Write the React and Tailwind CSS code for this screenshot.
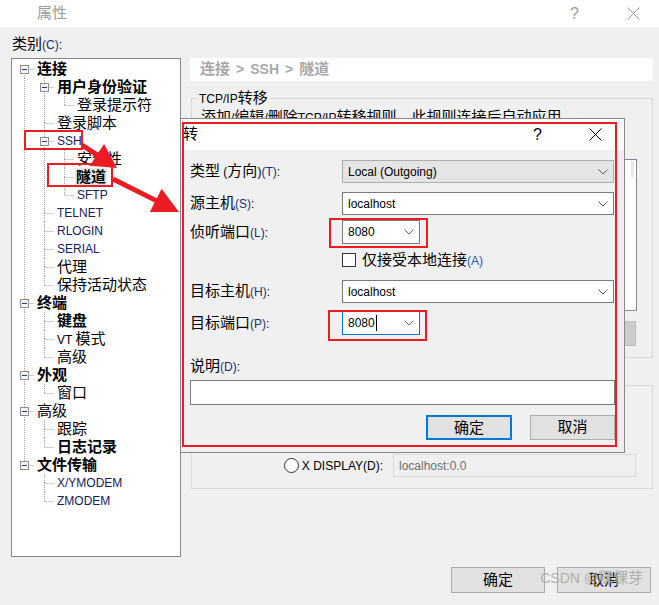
import React from 'react'

const CJK = /([\u2E80-\u9FFF\u3000-\u303F\uFF00-\uFFEF]+)/

function T({ s }) {
  return s.split(CJK).map((p, i) =>
    i % 2 ? <span key={i} className="text-[15px]">{p}</span> : p
  )
}

const nodes = [
  ['连接', 0, 1, 1], ['用户身份验证', 1, 1, 1], ['登录提示符', 2, 0, 0], ['登录脚本', 1, 0, 0],
  ['SSH', 1, 0, 1], ['安全性', 2, 0, 0], ['隧道', 2, 1, 0], ['SFTP', 2, 0, 0],
  ['TELNET', 1, 0, 0], ['RLOGIN', 1, 0, 0], ['SERIAL', 1, 0, 0], ['代理', 1, 0, 0],
  ['保持活动状态', 1, 0, 0], ['终端', 0, 1, 1], ['键盘', 1, 1, 0], ['VT 模式', 1, 0, 0],
  ['高级', 1, 0, 0], ['外观', 0, 1, 1], ['窗口', 1, 0, 0], ['高级', 0, 0, 1],
  ['跟踪', 1, 0, 0], ['日志记录', 1, 1, 0], ['文件传输', 0, 1, 1], ['X/YMODEM', 1, 0, 0],
  ['ZMODEM', 1, 0, 0],
]

function hasNext(i) {
  const lv = nodes[i][1]
  for (let j = i + 1; j < nodes.length; j++) {
    if (nodes[j][1] < lv) return false
    if (nodes[j][1] === lv) return true
  }
  return false
}

function guideOn(i, c) {
  for (let k = i - 1; k >= 0; k--) if (nodes[k][1] === c) return hasNext(k)
  return false
}

const dot = { stroke: '#a0a0a0', strokeDasharray: '1 1' }

function TreeRow({ i }) {
  const [label, lv, bold, kids] = nodes[i]
  const cols = []
  for (let c = 0; c < lv; c++) {
    cols.push(
      <svg key={c} width="20" height="18" className="shrink-0">
        {guideOn(i, c) && <line x1="10.5" y1="0" x2="10.5" y2="18" {...dot} />}
      </svg>
    )
  }
  const down = hasNext(i)
  const sel = label === '隧道'
  const latin = !CJK.test(label)
  return (
    <div className="flex h-[18px] items-center">
      {cols}
      <svg width="20" height="18" className="shrink-0">
        {i > 0 && <line x1="10.5" y1="0" x2="10.5" y2="9" {...dot} />}
        {down && <line x1="10.5" y1="9" x2="10.5" y2="18" {...dot} />}
        <line x1="10.5" y1="9.5" x2="20" y2="9.5" {...dot} />
        {kids ? (
          <g>
            <rect x="6.5" y="5.5" width="8" height="8" fill="#f3f3f3" stroke="#8f8f8f" />
            <line x1="8" y1="9.5" x2="13" y2="9.5" stroke="#2b3a86" />
          </g>
        ) : null}
      </svg>
      <span
        className={`whitespace-nowrap leading-[18px] ${bold ? 'font-bold' : ''} ${
          sel ? 'ml-[1px] bg-[#e6e6e6] px-[1px]' : 'ml-[3px]'
        } ${latin ? 'text-[#17205a]' : 'text-black'}`}
      >
        <T s={label} />
      </span>
    </div>
  )
}

const Chevron = () => (
  <svg width="10" height="6" className="shrink-0">
    <polyline points="0.5,0.5 5,5 9.5,0.5" fill="none" stroke="#606060" />
  </svg>
)

function Combo({ value, w = 'w-[272px]', grey, focus, caret }) {
  return (
    <div
      className={`${w} h-full flex items-center justify-between pl-[5px] pr-[5px] border ${
        grey ? 'bg-[#e5e5e5] border-[#adadad]' : 'bg-white border-[#7a7a7a]'
      } ${focus ? 'border-[#0078d7]' : ''}`}
    >
      <span className="flex items-center text-black">
        {value}
        {caret && <span className="inline-block w-px h-[16px] bg-black ml-[1px]" />}
      </span>
      <Chevron />
    </div>
  )
}

function Label({ cjk, k, tail = ':' }) {
  return (
    <span className="whitespace-nowrap">
      <T s={cjk} />
      <span className="text-[#1b2f74]">({k})</span>
      {tail}
    </span>
  )
}

function Row({ h, mt, children }) {
  return (
    <div className={`flex items-center ${h} ${mt}`}>
      {children}
    </div>
  )
}

function XIcon({ color }) {
  return (
    <svg width="13" height="13">
      <line x1="0.5" y1="0.5" x2="12.5" y2="12.5" stroke={color} />
      <line x1="12.5" y1="0.5" x2="0.5" y2="12.5" stroke={color} />
    </svg>
  )
}

function arrow(x1, y1, x2, y2, w = 3, hl = 24, hw = 12) {
  const dx = x2 - x1, dy = y2 - y1, len = Math.hypot(dx, dy)
  const ux = dx / len, uy = dy / len, nx = -uy, ny = ux
  const bx = x2 - ux * hl, by = y2 - uy * hl
  const p = [
    [x1 + nx * w, y1 + ny * w], [bx + nx * w, by + ny * w], [bx + nx * hw, by + ny * hw],
    [x2, y2], [bx - nx * hw, by - ny * hw], [bx - nx * w, by - ny * w], [x1 - nx * w, y1 - ny * w],
  ]
  return p.map((q) => q.join(',')).join(' ')
}

export default function App() {
  const red = '#ec1c24'
  return (
    <div className="relative w-[659px] h-[605px] overflow-hidden bg-[#f0f0f0] text-[12px] text-black font-['Liberation_Sans','Noto_Sans_CJK_SC',sans-serif]">
      {/* title bar */}
      <div className="h-[27px] bg-white flex items-center">
        <span className="ml-[37px] text-[#9a9a9a]"><T s="属性" /></span>
        <div className="flex-1" />
        <span className="text-[#9a9a9a] text-[16px] leading-none">?</span>
        <div className="ml-[48px] mr-[19px] flex">
          <XIcon color="#9a9a9a" />
        </div>
      </div>

      <div className="pl-[11px]">
        <div className="ml-[1px] mt-[8px] leading-[18px]">
          <Label cjk="类别" k="C" />
        </div>

        <div className="flex mt-[4px]">
          {/* tree */}
          <div className="w-[170px] h-[499px] shrink-0 border border-[#828790] bg-white pt-[1px] pl-[2px]">
            {nodes.map((_, i) => <TreeRow key={i} i={i} />)}
          </div>

          {/* right panel */}
          <div className="ml-[9px] w-[463px] flex flex-col">
            <div className="h-[23px] bg-white pl-[10px] flex items-center gap-[6px] font-bold text-[#a8a8a8] whitespace-nowrap text-[14px]">
              <span className="text-[15px]">连接</span>
              <span>&gt;</span>
              <span>SSH</span>
              <span>&gt;</span>
              <span className="text-[15px]">隧道</span>
            </div>

            <fieldset className="mt-[8px] ml-[1px] w-[462px] h-[269px] border border-[#d9d9d9] pl-[5px] pr-[15px] flex flex-col">
              <legend className="px-[2px] leading-[18px]"><T s="TCP/IP转移" /></legend>
              <div className="ml-[4px] h-[18px] leading-[18px] whitespace-nowrap">
                <T s="添加/编辑/删除TCP/IP转移规则。此规则连接后自动应用" />
              </div>
              <div className="ml-[4px] mt-[33px] h-[152px] border border-[#828790] bg-white flex justify-end">
                <div className="w-[3px] h-[16px] mr-[2px] mt-[1px] bg-[#e8e8e8]" />
              </div>
              <div className="self-end mt-[10px] mr-[1px] w-[75px] h-[25px] bg-[#cccccc] border border-[#bfbfbf]" />
            </fieldset>

            <fieldset className="mt-[18px] ml-[1px] w-[462px] h-[113px] border border-[#d9d9d9] pl-[5px] pr-[16px]">
              <legend className="px-[2px] leading-[18px]"><T s="X11 转移" /></legend>
              <div className="mt-[59px] h-[23px] flex items-center justify-end">
                <span className="w-[15px] h-[15px] rounded-full border border-[#333] bg-white" />
                <span className="ml-[3px] whitespace-nowrap">X DISPLAY(D):</span>
                <div className="ml-[10px] w-[243px] h-[23px] border border-[#d9d9d9] bg-[#f0f0f0] flex items-center pl-[5px] text-[#6d6d6d]">
                  localhost:0.0
                </div>
              </div>
            </fieldset>
          </div>
        </div>

        {/* bottom buttons */}
        <div className="mt-[10px] flex justify-end gap-[12px] pr-[8px]">
          <button className="w-[94px] h-[26px] bg-[#e1e1e1] border border-[#adadad]"><T s="确定" /></button>
          <button className="w-[94px] h-[26px] bg-[#e1e1e1] border border-[#adadad]"><T s="取消" /></button>
        </div>
      </div>

      <div className="absolute right-[16px] bottom-[16px] text-[14px] text-[#a9a9a9] opacity-90 whitespace-nowrap">
        CSDN @<span className="text-[15px]">粿粿芽</span>
      </div>

      {/* forwarding dialog */}
      <div className="absolute left-[180px] top-[118px] w-[445px] h-[335px] border border-[#8a8a8a] bg-[#f0f0f0] flex flex-col">
        <div className="h-[31px] bg-white flex items-center">
          <span className="ml-[2px]"><T s="转" /></span>
          <div className="flex-1" />
          <span className="text-[16px] leading-none">?</span>
          <div className="ml-[47px] mr-[22px] flex">
            <XIcon color="#000" />
          </div>
        </div>
        <div className="pl-[9px] pr-[9px] flex flex-col">
          <Row h="h-[23px]" mt="mt-[10px]">
            <div className="w-[152px]"><Label cjk="类型 (方向)" k="T" /></div>
            <Combo value="Local (Outgoing)" grey />
          </Row>
          <Row h="h-[23px]" mt="mt-[9px]">
            <div className="w-[152px]"><Label cjk="源主机" k="S" /></div>
            <Combo value="localhost" />
          </Row>
          <Row h="h-[24px]" mt="mt-[5px]">
            <div className="w-[152px]"><Label cjk="侦听端口" k="L" /></div>
            <Combo value="8080" w="w-[78px]" />
          </Row>
          <Row h="h-[14px]" mt="mt-[9px]">
            <div className="w-[152px]" />
            <span className="w-[14px] h-[14px] border border-[#333] bg-white" />
            <span className="ml-[6px] whitespace-nowrap">
              <T s="仅接受本地连接" /><span className="text-[#1b5cb0]">(A)</span>
            </span>
          </Row>
          <Row h="h-[23px]" mt="mt-[13px]">
            <div className="w-[152px]"><Label cjk="目标主机" k="H" /></div>
            <Combo value="localhost" />
          </Row>
          <Row h="h-[24px]" mt="mt-[8px]">
            <div className="w-[152px]"><Label cjk="目标端口" k="P" /></div>
            <Combo value="8080" w="w-[78px]" focus caret />
          </Row>
          <div className="mt-[22px] h-[18px] leading-[18px]">
            <Label cjk="说明" k="D" />
          </div>
          <div className="mt-[5px] h-[25px] bg-white border border-[#7a7a7a]" />
          <div className="mt-[10px] flex justify-end gap-[18px]">
            <button className="w-[86px] h-[25px] bg-[#e1e1e1] border-2 border-[#0078d7]"><T s="确定" /></button>
            <button className="w-[85px] h-[25px] bg-[#e1e1e1] border border-[#adadad]"><T s="取消" /></button>
          </div>
        </div>
      </div>

      {/* red annotations */}
      <svg className="absolute inset-0 pointer-events-none" width="659" height="605">
        <g fill="none" stroke={red} strokeWidth="2">
          <rect x="25" y="131" width="57" height="18" />
          <rect x="48" y="164" width="64" height="22" />
          <rect x="183" y="123" width="433" height="323" />
          <rect x="330" y="219" width="97" height="28" />
          <rect x="329" y="311" width="97" height="29" />
        </g>
        <polygon points={arrow(82, 145, 117, 168, 2.5, 24, 13)} fill={red} />
        <polygon points={arrow(113, 179, 179, 212, 2.5, 26, 13)} fill={red} />
      </svg>
    </div>
  )
}
